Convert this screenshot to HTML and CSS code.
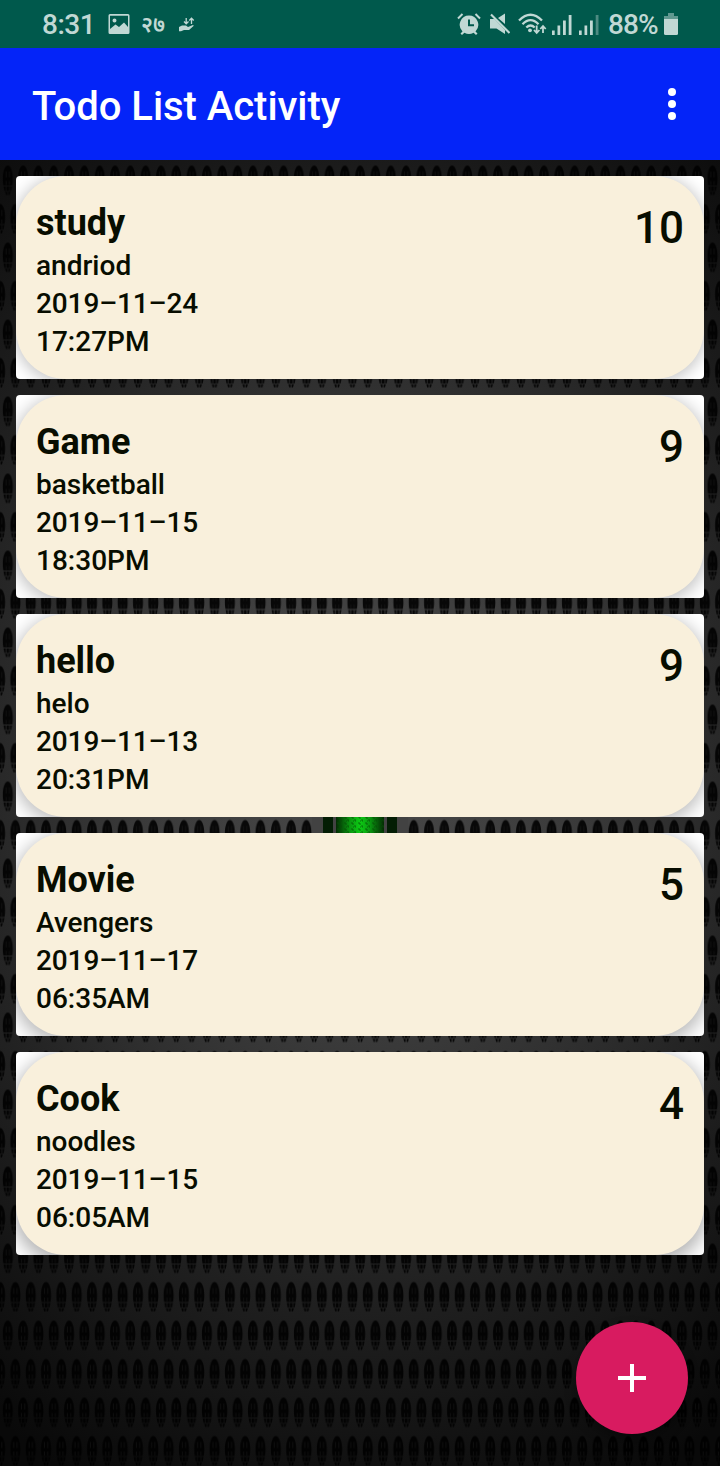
FILE: index.html
```
<!DOCTYPE html>
<html lang="en">
<head>
<meta charset="utf-8">
<title>Todo List Activity</title>
<link rel="stylesheet" href="styles.css">
</head>
<body>
<div class="screen">
  <svg class="backdrop" width="720" height="1306" viewBox="0 160 720 1306" aria-hidden="true">
    <defs>
      <radialGradient id="steel" gradientUnits="userSpaceOnUse" cx="360" cy="760" r="800" gradientTransform="translate(360 0) scale(.8 1) translate(-360 0)">
        <stop offset="0" stop-color="#4a4a4a"/>
        <stop offset=".35" stop-color="#3a3a3a"/>
        <stop offset=".62" stop-color="#242424"/>
        <stop offset=".88" stop-color="#111"/>
        <stop offset="1" stop-color="#090909"/>
      </radialGradient>
      <linearGradient id="lamp">
        <stop offset="0" stop-color="#032b03"/>
        <stop offset=".3" stop-color="#0a9a10"/>
        <stop offset=".5" stop-color="#0ccb14"/>
        <stop offset=".7" stop-color="#0a9a10"/>
        <stop offset="1" stop-color="#032b03"/>
      </linearGradient>
      <g id="hole">
        <path d="M0 0C3 0 5 6 5 13 5 16 4.800 18 4.400 20H-4.400C-4.800 18-5 16-5 13-5 6-3 0 0 0ZM-4.300 21H-2.200V25.500H-3.400ZM-1.400 21H1.400V25.500H-1.400ZM2.200 21H4.300L3.400 25.500H2.200ZM-2.700 26.300H-.5V29.500H-1.800ZM.5 26.300H2.700L1.800 29.500H.5Z" fill="#000" fill-opacity=".88"/>
        <path d="M-1.600 15.500v4M1.600 15.500v4M-1.600 6v6M1.600 6v6" stroke="#3c3c3c" stroke-opacity=".25" stroke-width=".8" fill="none"/>
      </g>
      <pattern id="mesh" patternUnits="userSpaceOnUse" x="0" y="165.500" width="15.32" height="77">
        <use href="#hole" x="7.8" y="0"/>
        <use href="#hole" x="0.1" y="38.5"/>
        <use href="#hole" x="15.42" y="38.5"/>
      </pattern>
      <pattern id="grain" patternUnits="userSpaceOnUse" width="7" height="6">
        <path d="M1 1h2v2M5 3v2h1M3 5h1" stroke="#044d06" stroke-width="1" fill="none" opacity=".7"/>
      </pattern>
    </defs>
    <rect y="160" width="720" height="1306" fill="url(#steel)"/>
    <rect y="160" width="720" height="1306" fill="url(#mesh)"/>
    <rect x="312" y="812" width="96" height="26" fill="#424242"/>
    <rect x="323" y="812" width="10" height="26" fill="#031d04"/>
    <rect x="336" y="812" width="48" height="26" fill="url(#lamp)"/>
    <rect x="336" y="812" width="48" height="26" fill="url(#grain)"/>
    <rect x="387" y="812" width="10" height="26" fill="#031d04"/>
  </svg>

  <header class="status">
    <span class="clock">8:31</span>
    <svg class="ic-photo" width="22" height="20" viewBox="0 0 22 20"><path fill-rule="evenodd" d="M2 0H20Q21.500 0 21.500 1.500V18.500Q21.500 20 20 20H2Q.5 20 .5 18.500V1.500Q.5 0 2 0ZM2 1.800V15L7.500 10.500 11 13 16 8.500 20 13V1.800ZM6.500 4.500a2 2 0 1 1 0 4 2 2 0 0 1 0-4Z"/></svg>
    <span class="deva">२७</span>
    <svg class="ic-hand" width="16" height="15" viewBox="0 0 16 15"><path d="M0 10 3 8.500h4l2 1.500 5-2 .8.800L10 13H5l-3 1.200H0Z"/><path d="M7.200 1v5.500M5 4.500l2.200 2.300 2.300-2.300M12.500 7V1.500M10.300 3.500l2.200-2.300 2.200 2.300" fill="none" stroke="currentColor" stroke-width="1.300"/></svg>
    <span class="grow"></span>
    <svg class="ic-alarm" width="24" height="22" viewBox="0 0 24 22"><path fill-rule="evenodd" d="M12 2.500a9.300 9.300 0 0 1 6.500 15.900l2 2.200-1.500 1.400-2.400-2.200a9.300 9.300 0 0 1-9.200 0L5 22l-1.500-1.400 2-2.200A9.300 9.300 0 0 1 12 2.500ZM11 6.500v6.700h6v-2h-4V6.500Z"/><path d="M1 5.500 5.500 1M18.500 1 23 5.500" stroke="currentColor" stroke-width="2" fill="none"/></svg>
    <svg class="ic-mute" width="20" height="22" viewBox="0 0 20 22"><path d="M0 6h4.500L15 17V21L6.500 15.500H0ZM8 5 15 .5v10.500Z"/><path d="m1 1.500 18.500 18.500" stroke="currentColor" stroke-width="2.200"/></svg>
    <svg class="ic-wifi" width="29" height="22" viewBox="0 0 29 22"><g fill="none" stroke="currentColor" stroke-width="2.300"><path d="M1 7.500Q12.500-4 24 7.500M4.500 11.200Q12.500 3 20.500 11.200M8.300 14.500Q12.500 10.500 16.700 14.500"/><path stroke-width="1.800" d="M18.700 12.500v7M16 17l2.700 3 2.700-3M25 20v-6.500M22.300 16l2.700-3 2.700 3"/></g><circle cx="12" cy="17.300" r="1.900"/></svg>
    <svg class="ic-bars" width="20" height="20" viewBox="0 0 20 20"><path d="M0 15.500h2.700V20H0ZM5.500 10.500H8.200V20H5.500ZM11 5.500h2.800v14.500H11ZM16.700 0h2.800v20h-2.800Z"/></svg>
    <svg class="ic-bars ic-bars2" width="20" height="20" viewBox="0 0 20 20"><path d="M0 15.500h2.700V20H0ZM5.500 10.500H8.200V20H5.500ZM11 5.500h2.800v14.500H11Z"/><path opacity=".4" d="M16.700 0h2.800v20h-2.800Z"/></svg>
    <span class="percent">88%</span>
    <svg class="ic-batt" width="14" height="22" viewBox="0 0 14 22"><path opacity=".5" d="M4 0h6v3h4v3H0V3h4Z"/><path d="M0 6h14v14.500q0 1.500-1.500 1.500h-11Q0 22 0 20.500Z"/></svg>
  </header>

  <div class="appbar">
    <h1 class="heading">Todo List Activity</h1>
    <svg class="menu" width="8" height="32" viewBox="0 0 8 32"><circle cx="4" cy="4" r="4"/><circle cx="4" cy="16" r="4"/><circle cx="4" cy="28" r="4"/></svg>
  </div>

  <main class="list">
    <article class="card"><div class="panel shade1">
      <div class="info"><h2 class="name">study</h2><p class="line">andriod</p><p class="line date">2019–11–24</p><p class="line">17:27PM</p></div>
      <span class="priority">10</span></div></article>
    <article class="card"><div class="panel shade2">
      <div class="info"><h2 class="name">Game</h2><p class="line">basketball</p><p class="line date">2019–11–15</p><p class="line">18:30PM</p></div>
      <span class="priority">9</span></div></article>
    <article class="card"><div class="panel shade3">
      <div class="info"><h2 class="name">hello</h2><p class="line">helo</p><p class="line date">2019–11–13</p><p class="line">20:31PM</p></div>
      <span class="priority">9</span></div></article>
    <article class="card"><div class="panel shade4">
      <div class="info"><h2 class="name">Movie</h2><p class="line">Avengers</p><p class="line date">2019–11–17</p><p class="line">06:35AM</p></div>
      <span class="priority">5</span></div></article>
    <article class="card"><div class="panel shade5">
      <div class="info"><h2 class="name">Cook</h2><p class="line">noodles</p><p class="line date">2019–11–15</p><p class="line">06:05AM</p></div>
      <span class="priority">4</span></div></article>
  </main>

  <button class="fab" aria-label="Add"><svg width="28" height="28" viewBox="0 0 28 28"><path d="M12 0h4v12h12v4H16v12h-4V16H0v-4h12Z"/></svg></button>
</div>
</body>
</html>
```
FILE: styles.css
```
* { box-sizing: border-box; }
body { margin: 0; background: #111; font-family: Roboto, "Noto Sans", sans-serif; }
h1, h2, p { margin: 0; }
svg { display: block; fill: currentColor; flex: none; }

.screen { position: relative; width: 720px; height: 1466px; overflow: hidden; }
.backdrop { position: absolute; left: 0; top: 160px; }

.status {
  display: flex; align-items: flex-start; height: 48px; padding: 0 42px;
  background: #00594c; color: #c0d8d4;
}
.clock, .percent { font-size: 28px; font-weight: 500; line-height: 33px; margin-top: 8px; white-space: nowrap; }
.clock { width: 52px; letter-spacing: -0.5px; }
.percent { width: 49px; margin-left: 9px; letter-spacing: -0.9px; }
.ic-photo { margin: 14px 0 0 14px; }
.deva { width: 24px; margin: 5px 0 0 11px; font: 600 22px/36px "Noto Sans", sans-serif; white-space: nowrap; }
.ic-hand { margin: 17px 0 0 14px; }
.grow { flex: 1; }
.ic-alarm { margin-top: 13px; }
.ic-mute { margin: 13px 0 0 9px; }
.ic-wifi { margin: 13px 0 0 8px; }
.ic-bars { margin: 15px 0 0 5px; }
.ic-bars2 { margin-left: 7px; }
.ic-batt { margin: 13px 0 0 7px; }

.appbar {
  display: flex; align-items: center; justify-content: space-between;
  height: 112px; padding: 0 44px 0 32px; background: #0424f8; color: #fff;
}
.heading { font-size: 40px; line-height: 48px; font-weight: 500; padding-top: 6px; letter-spacing: -0.04px; }

.list { position: relative; display: flex; flex-direction: column; gap: 16px; padding: 16px; }
.card { height: 203px; background: #fff; border-radius: 4px; overflow: hidden; }
.panel {
  display: flex; justify-content: space-between; height: 203px; padding: 25px 20px 0;
  border-radius: 50px; background: #f9f0dc; color: #080d00;
}
.shade1 { box-shadow: 0 2px 14px 3px rgba(0,0,0,.2); }
.shade2 { box-shadow: 0 3px 15px 3px rgba(0,0,0,.22); }
.shade3 { box-shadow: 0 4px 16px 3px rgba(0,0,0,.24); }
.shade4 { box-shadow: 0 5px 17px 3px rgba(0,0,0,.27); }
.shade5 { box-shadow: 0 6px 18px 3px rgba(0,0,0,.3); }
.name { font-size: 36px; line-height: 44px; padding-bottom: 2px; font-weight: 700; }
.line { font-size: 28px; line-height: 38px; font-weight: 500; }
.date { letter-spacing: -0.12px; }
.priority { font-size: 44px; line-height: 54px; font-weight: 500; }

.fab {
  position: absolute; left: 576px; top: 1322px; width: 112px; height: 112px;
  display: flex; align-items: center; justify-content: center; padding: 0;
  border: 0; border-radius: 50%; background: #d81b60; color: #fff;
  box-shadow: 0 6px 12px rgba(0,0,0,.35);
}
```
